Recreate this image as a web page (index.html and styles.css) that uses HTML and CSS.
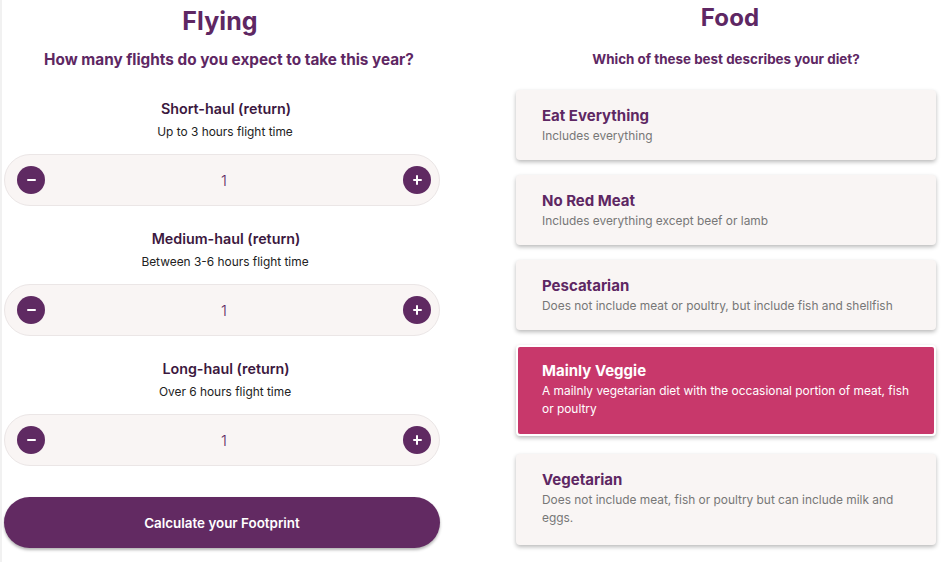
FILE: index.html
```html
<!DOCTYPE html>
<html lang="en">
<head>
<meta charset="utf-8">
<title>Footprint</title>
<link rel="stylesheet" href="styles.css">
</head>
<body>
<div class="page">
  <section class="col flying">
    <h1 class="title">Flying</h1>
    <h2 class="question q-flying">How many flights do you expect to take this year?</h2>

    <div class="group">
      <div class="label">Short-haul (return)</div>
      <div class="hint">Up to 3 hours flight time</div>
      <div class="stepper">
        <button class="round"><span class="bar"></span></button>
        <span class="count">1</span>
        <button class="round"><span class="bar"></span><span class="bar vert"></span></button>
      </div>
    </div>

    <div class="group">
      <div class="label">Medium-haul (return)</div>
      <div class="hint">Between 3-6 hours flight time</div>
      <div class="stepper">
        <button class="round"><span class="bar"></span></button>
        <span class="count">1</span>
        <button class="round"><span class="bar"></span><span class="bar vert"></span></button>
      </div>
    </div>

    <div class="group">
      <div class="label">Long-haul (return)</div>
      <div class="hint">Over 6 hours flight time</div>
      <div class="stepper">
        <button class="round"><span class="bar"></span></button>
        <span class="count">1</span>
        <button class="round"><span class="bar"></span><span class="bar vert"></span></button>
      </div>
    </div>

    <button class="calc">Calculate your Footprint</button>
  </section>

  <section class="col food">
    <h1 class="title food-title">Food</h1>
    <h2 class="question q-food">Which of these best describes your diet?</h2>
    <div class="cards">
      <div class="card">
        <div class="card-title">Eat Everything</div>
        <div class="card-desc">Includes everything</div>
      </div>
      <div class="card">
        <div class="card-title">No Red Meat</div>
        <div class="card-desc">Includes everything except beef or lamb</div>
      </div>
      <div class="card">
        <div class="card-title">Pescatarian</div>
        <div class="card-desc">Does not include meat or poultry, but include fish and shellfish</div>
      </div>
      <div class="card selected">
        <div class="card-title">Mainly Veggie</div>
        <div class="card-desc">A mailnly vegetarian diet with the occasional portion of meat, fish or poultry</div>
      </div>
      <div class="card tall">
        <div class="card-title">Vegetarian</div>
        <div class="card-desc">Does not include meat, fish or poultry but can include milk and eggs.</div>
      </div>
    </div>
  </section>
</div>
</body>
</html>
```

FILE: styles.css
```css
* { box-sizing: border-box; }

html, body {
  margin: 0;
  padding: 0;
  background: #ffffff;
}

body {
  font-family: "Inter", "Open Sans", sans-serif;
  color: #222222;
  width: 946px;
  height: 562px;
  overflow: hidden;
}

.page {
  display: flex;
  height: 562px;
  border-left: 2px solid #f1f1f1;
  padding-left: 2px;
}

.col {
  display: flex;
  flex-direction: column;
}

.flying {
  width: 436px;
  align-items: stretch;
}

.food {
  width: 420px;
  margin-left: 76px;
}

.title {
  margin: 4px 0 0;
  font-size: 25px;
  line-height: 34px;
  font-weight: 700;
  color: #5e2763;
  text-align: center;
  letter-spacing: 0.1px;
}

.flying .title {
  padding-right: 4px;
}

.food-title {
  margin-top: 1px;
  margin-left: 8px;
  font-size: 24px;
}

.question {
  margin: 11px 0 0;
  font-size: 15.3px;
  line-height: 22px;
  font-weight: 700;
  color: #5e2763;
  text-align: center;
}

.q-flying {
  padding-left: 14px;
}

.q-food {
  font-size: 13.4px;
  line-height: 20px;
  margin-top: 14px;
}

.group {
  display: flex;
  flex-direction: column;
  margin-top: 28px;
}

.group + .group {
  margin-top: 23px;
}

.label {
  text-align: center;
  font-size: 14.3px;
  line-height: 20px;
  font-weight: 600;
  color: #3c1840;
  padding-left: 8px;
}

.hint {
  margin-top: 4px;
  text-align: center;
  font-size: 11.9px;
  line-height: 18px;
  color: #222222;
  padding-left: 6px;
}

.stepper {
  margin-top: 13px;
  height: 52px;
  border-radius: 26px;
  background: #f9f5f4;
  border: 1px solid #ebe6e6;
  display: flex;
  align-items: center;
  justify-content: space-between;
  padding: 0 8px 0 12px;
}

.round {
  position: relative;
  width: 28px;
  height: 28px;
  border-radius: 50%;
  border: none;
  padding: 0;
  background: #5f2a62;
  display: flex;
  align-items: center;
  justify-content: center;
}

.bar {
  position: absolute;
  width: 9px;
  height: 2px;
  background: #ffffff;
  border-radius: 1px;
}

.bar.vert {
  width: 2px;
  height: 10px;
}

.count {
  font-size: 15px;
  font-weight: 300;
  color: #5e2763;
}

.calc {
  margin-top: 31px;
  height: 51px;
  border-radius: 26px;
  border: none;
  background: #622a62;
  color: #ffffff;
  font-family: inherit;
  font-size: 13.4px;
  font-weight: 600;
  box-shadow: 0 2px 3px rgba(0, 0, 0, 0.3);
}

.cards {
  margin-top: 21px;
  display: flex;
  flex-direction: column;
  gap: 15px;
}

.card {
  background: #f9f5f4;
  border-radius: 4px;
  padding: 16px 26px 15px;
  box-shadow: 0 2px 4px rgba(0, 0, 0, 0.28);
}

.card.tall {
  padding-bottom: 18px;
}

.card-title {
  font-size: 15px;
  line-height: 20px;
  font-weight: 700;
  color: #5e2763;
}

.card-desc {
  margin-top: 1px;
  font-size: 11.9px;
  line-height: 18px;
  color: #777777;
}

.card.selected {
  background: #c8386b;
  border: 2px solid #ffffff;
  padding: 14px 24px 16px;
}

.card.selected .card-title,
.card.selected .card-desc {
  color: #ffffff;
}

.card.selected + .card {
  margin-top: 3px;
}
```
